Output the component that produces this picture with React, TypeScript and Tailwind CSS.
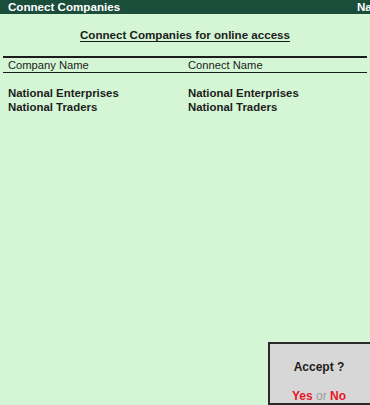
export default function App() {
  const rows = [
    { company: "National Enterprises", connect: "National Enterprises" },
    { company: "National Traders", connect: "National Traders" },
  ];

  return (
    <div
      className="relative w-[370px] h-[405px] overflow-hidden bg-[#d5f6d5] text-[#1c1c1c]"
      style={{ fontFamily: '"Liberation Sans", Arial, sans-serif' }}
    >
      <div className="h-[14px] bg-[#1b4d3b] flex items-center justify-between pl-[8px] pr-0 text-white font-bold text-[11.6px] leading-none">
        <span>Connect Companies</span>
        <span className="w-[13px] overflow-hidden whitespace-nowrap">Name</span>
      </div>

      <div className="pt-[14px] flex justify-center">
        <span className="font-bold text-[11.6px] leading-[14px] underline underline-offset-[2px]">
          Connect Companies for online access
        </span>
      </div>

      <div className="mx-[3px] mt-[14px] border-t-2 border-b border-[#1c1c1c]">
        <div className="grid grid-cols-[180px_1fr] pl-[5px] text-[11.2px] leading-[14px]">
          <span>Company Name</span>
          <span>Connect Name</span>
        </div>
      </div>

      <div className="mt-[13px] pl-[8px] flex flex-col">
        {rows.map((r) => (
          <div
            key={r.company}
            className="grid grid-cols-[180px_1fr] font-bold text-[11.4px] leading-[14px]"
          >
            <span>{r.company}</span>
            <span>{r.connect}</span>
          </div>
        ))}
      </div>

      <div className="absolute left-[268px] top-[342px] w-[110px] h-[63px] bg-[#d7d7d7] border-2 border-[#2a2a2a] flex flex-col items-center pr-[8px]">
        <span className="mt-[16px] font-bold text-[12px] leading-[14px]">Accept ?</span>
        <span className="mt-[15px] font-bold text-[12px] leading-[14px]">
          <span className="text-[#e8182a]">Yes</span>
          <span className="text-[#9a9a9a] font-normal"> or </span>
          <span className="text-[#e8182a]">No</span>
        </span>
      </div>
    </div>
  );
}
